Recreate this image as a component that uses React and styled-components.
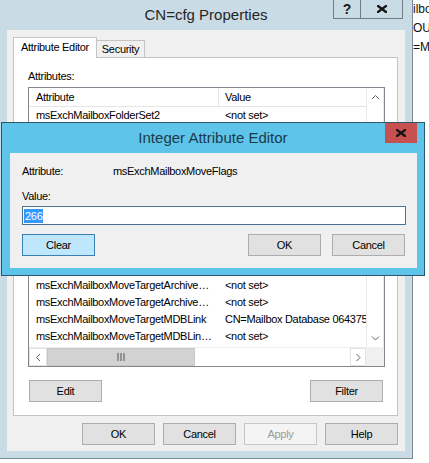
import React from 'react';
import styled, { createGlobalStyle } from 'styled-components';

const Global = createGlobalStyle`
  html, body { margin: 0; padding: 0; background: #fff; }
  body { width: 429px; height: 463px; overflow: hidden; font-family: "Liberation Sans", Arial, sans-serif; }
  * { box-sizing: border-box; }
`;

const Desktop = styled.div`
  position: relative;
  width: 429px;
  height: 463px;
  overflow: hidden;
  background: #fff;
  font-family: "Liberation Sans", Arial, sans-serif;
  font-size: 11px;
  letter-spacing: -0.3px;
  color: #000;
`;

const BackdropText = styled.div`
  position: absolute;
  left: 413px;
  top: 0;
  font-size: 12px;
  line-height: 19px;
  letter-spacing: 0;
  color: #111;
  white-space: pre;
`;

const Tick = styled.div`
  position: absolute;
  left: 40px;
  top: 455px;
  font-size: 9px;
  color: #666;
`;

const Window = styled.div`
  position: absolute;
  left: -1px;
  top: -1px;
  width: 414px;
  height: 460px;
  border: 1px solid #7c8a93;
  background: #c9dbe5;
  display: flex;
  flex-direction: column;
`;

const TitleBar = styled.div`
  height: ${p => p.$h}px;
  flex: none;
  display: grid;
  grid-template-columns: 1fr auto 1fr;
`;

const Title = styled.div`
  grid-column: 2;
  font-size: 15px;
  letter-spacing: 0;
  line-height: ${p => p.$h}px;
  color: ${p => p.$color};
  white-space: nowrap;
`;

const CaptionGroup = styled.div`
  grid-column: 3;
  justify-self: end;
  align-self: start;
  display: flex;
  margin-right: 9px;
`;

const CaptionButton = styled.div`
  width: ${p => p.$w}px;
  height: 19px;
  border: 1px solid #707c85;
  border-top: none;
  border-left: ${p => (p.$joined ? 'none' : '1px solid #707c85')};
  display: flex;
  align-items: center;
  justify-content: center;
  font-size: 14px;
  font-weight: bold;
  letter-spacing: 0;
  color: #1a1a1a;
`;

const Client = styled.div`
  flex: 1;
  margin: 0 7px 7px 7px;
  background: #f0f0f0;
  padding: 7px 7px 6px 6px;
  display: flex;
  flex-direction: column;
`;

const TabStrip = styled.div`
  height: 20px;
  flex: none;
  display: flex;
  align-items: flex-end;
  position: relative;
  z-index: 1;
`;

const Tab = styled.div`
  width: ${p => p.$w}px;
  height: ${p => (p.$active ? 21 : 17)}px;
  margin-bottom: ${p => (p.$active ? -1 : 0)}px;
  background: ${p => (p.$active ? '#fff' : '#f0f0f0')};
  border: 1px solid #c4c4c4;
  border-bottom: none;
  border-left: ${p => (p.$active ? '1px solid #c4c4c4' : 'none')};
  padding-left: ${p => (p.$active ? 7 : 0)}px;
  text-align: ${p => (p.$active ? 'left' : 'center')};
  line-height: ${p => (p.$active ? 19 : 16)}px;
  white-space: nowrap;
`;

const Panel = styled.div`
  flex: 1;
  background: #fff;
  border: 1px solid #c4c4c4;
  padding: 12px 12px 13px 14px;
  display: flex;
  flex-direction: column;
`;

const FieldLabel = styled.div`
  line-height: 13px;
  margin-bottom: 4px;
`;

const ListView = styled.div`
  height: 280px;
  flex: none;
  border: 1px solid #828790;
  display: grid;
  grid-template-columns: 1fr 18px;
  grid-template-rows: 1fr 19px;
  background: #fff;
`;

const ListContent = styled.div`
  overflow: hidden;
`;

const RowGrid = styled.div`
  display: grid;
  grid-template-columns: 190px 1fr;
  height: ${p => (p.$header ? 19 : 17)}px;
  line-height: ${p => (p.$header ? 19 : 17)}px;
  border-bottom: ${p => (p.$header ? '1px solid #e5e5e5' : 'none')};
`;

const Cell = styled.div`
  white-space: nowrap;
  overflow: hidden;
  text-overflow: ${p => (p.$ellipsis ? 'ellipsis' : 'clip')};
  padding-left: ${p => p.$pl}px;
  padding-right: ${p => (p.$ellipsis ? 5 : 0)}px;
  border-right: ${p => (p.$divider ? '1px solid #e5e5e5' : 'none')};
`;

const VScroll = styled.div`
  grid-column: 2;
  grid-row: 1;
  display: flex;
  flex-direction: column;
  background: #fff;
  border-left: 1px solid #e8e8e8;
  border-right: 1px solid #e8e8e8;
`;

const HScroll = styled.div`
  grid-column: 1;
  grid-row: 2;
  display: flex;
  background: #fff;
  border-top: 1px solid #ececec;
`;

const ArrowBox = styled.div`
  flex: none;
  width: ${p => (p.$w ? `${p.$w}px` : 'auto')};
  height: ${p => (p.$h ? `${p.$h}px` : 'auto')};
  display: flex;
  align-items: center;
  justify-content: center;
  border: ${p => (p.$boxed ? '1px solid #e3e3e3' : 'none')};
`;

const Track = styled.div`
  flex: 1;
  display: flex;
  flex-direction: ${p => (p.$vertical ? 'column' : 'row')};
`;

const Thumb = styled.div`
  flex: none;
  width: ${p => (p.$vertical ? '100%' : `${p.$size}px`)};
  height: ${p => (p.$vertical ? `${p.$size}px` : '100%')};
  margin-top: ${p => (p.$vertical ? 40 : 0)}px;
  background: #d2d2d2;
  border: 1px solid #c6c6c6;
  display: flex;
  align-items: center;
  justify-content: center;
`;

const Corner = styled.div`
  grid-column: 2;
  grid-row: 2;
  background: #f0f0f0;
`;

const ButtonRow = styled.div`
  display: flex;
  justify-content: ${p => p.$justify || 'space-between'};
  gap: ${p => p.$gap || 0}px;
  margin-top: ${p => p.$mt}px;
  padding: ${p => p.$pad || '0'};
`;

const Button = styled.div`
  width: 73px;
  height: 22px;
  flex: none;
  display: flex;
  align-items: center;
  justify-content: center;
  border: 1px solid ${p => (p.$variant === 'focus' ? '#3c7fb1' : p.$variant === 'disabled' ? '#c6c6c6' : '#adadad')};
  background: ${p => (p.$variant === 'focus' ? '#bee6fd' : p.$variant === 'disabled' ? '#f4f4f4' : '#e1e1e1')};
  color: ${p => (p.$variant === 'disabled' ? '#9a9a9a' : '#000')};
  margin-right: ${p => (p.$pushLeft ? 'auto' : '0')};
`;

const Dialog = styled.div`
  position: absolute;
  left: 1px;
  top: 122px;
  width: 424px;
  height: 154px;
  border: 1px solid #2f5568;
  background: #5ec4e9;
  display: flex;
  flex-direction: column;
  z-index: 5;
`;

const CloseButton = styled.div`
  grid-column: 3;
  justify-self: end;
  align-self: start;
  width: 32px;
  height: 20px;
  margin-right: 7px;
  background: #c75050;
  display: flex;
  align-items: center;
  justify-content: center;
`;

const DialogClient = styled.div`
  flex: 1;
  margin: 0 7px 7px 8px;
  background: #f0f0f0;
  padding: 12px 11px 12px 12px;
  display: flex;
  flex-direction: column;
`;

const InfoRow = styled.div`
  display: grid;
  grid-template-columns: 91px 1fr;
  line-height: 13px;
`;

const ValueLabel = styled.div`
  margin-top: 12px;
  line-height: 13px;
`;

const TextBox = styled.div`
  margin-top: 3px;
  height: 19px;
  border: 1px solid #4f7190;
  background: #fff;
  padding-left: 1px;
  display: flex;
  align-items: center;
`;

const Selected = styled.span`
  background: #3399ff;
  color: #fff;
  line-height: 14px;
  padding: 0 1px;
`;

const Chevron = ({ dir }) => {
  const pts = {
    up: '1,5 4.5,1.5 8,5',
    down: '1,1.5 4.5,5 8,1.5',
    left: '5,1 1.5,4.5 5,8',
    right: '1.5,1 5,4.5 1.5,8',
  }[dir];
  const vertical = dir === 'up' || dir === 'down';
  return (
    <svg width={vertical ? 9 : 7} height={vertical ? 7 : 9} viewBox={vertical ? '0 0 9 7' : '0 0 7 9'}>
      <polyline points={pts} fill="none" stroke="#606060" strokeWidth="1" />
    </svg>
  );
};

const Grip = () => (
  <svg width="8" height="8" viewBox="0 0 8 8">
    <rect x="0.5" y="0" width="1" height="8" fill="#555" />
    <rect x="3.5" y="0" width="1" height="8" fill="#555" />
    <rect x="6.5" y="0" width="1" height="8" fill="#555" />
  </svg>
);

const CloseGlyph = ({ w = 10, h = 8 }) => (
  <svg width={w} height={h} viewBox={`0 0 ${w} ${h}`}>
    <path d={`M1 1 L${w - 1} ${h - 1} M${w - 1} 1 L1 ${h - 1}`} stroke="#151515" strokeWidth="2.3" strokeLinecap="square" />
  </svg>
);

const rows = [
  ['msExchMailboxFolderSet2', '<not set>'],
  ['msExchMailboxGuid', '<not set>'],
  ['msExchMailboxMoveBatchName', '<not set>'],
  ['msExchMailboxMoveFlags', '266'],
  ['msExchMailboxMoveRemoteHostName', '<not set>'],
  ['msExchMailboxMoveRequestGuid', '<not set>'],
  ['msExchMailboxMoveSourceArchiveMDBLink', '<not set>'],
  ['msExchMailboxMoveSourceArchiveMDBLinkSL', '<not set>'],
  ['msExchMailboxMoveSourceMDBLink', '<not set>'],
  ['msExchMailboxMoveStatus', '<not set>'],
  ['msExchMailboxMoveTargetArchiveMDBLink', '<not set>'],
  ['msExchMailboxMoveTargetArchiveMDBLinkSL', '<not set>'],
  ['msExchMailboxMoveTargetMDBLink', 'CN=Mailbox Database 0643756294,CN=Databases,CN=Exchange'],
  ['msExchMailboxMoveTargetMDBLinkSL', '<not set>'],
];

export default function App() {
  return (
    <>
      <Global />
      <Desktop>
        <BackdropText>{'ilbox\nOU=\n=Mi'}</BackdropText>
        <Tick>''</Tick>

        <Window>
          <TitleBar $h={30}>
            <Title $h={30} $color="#262626">CN=cfg Properties</Title>
            <CaptionGroup>
              <CaptionButton $w={28}>?</CaptionButton>
              <CaptionButton $w={42} $joined>
                <CloseGlyph w={10} h={8} />
              </CaptionButton>
            </CaptionGroup>
          </TitleBar>

          <Client>
            <TabStrip>
              <Tab $active $w={84}>Attribute Editor</Tab>
              <Tab $w={48}>Security</Tab>
            </TabStrip>

            <Panel>
              <FieldLabel>Attributes:</FieldLabel>
              <ListView>
                <ListContent>
                  <RowGrid $header>
                    <Cell $pl={7} $divider>Attribute</Cell>
                    <Cell $pl={6}>Value</Cell>
                  </RowGrid>
                  {rows.map(([name, value]) => (
                    <RowGrid key={name}>
                      <Cell $pl={7} $ellipsis>{name}</Cell>
                      <Cell $pl={6}>{value}</Cell>
                    </RowGrid>
                  ))}
                </ListContent>
                <VScroll>
                  <ArrowBox $h={18}><Chevron dir="up" /></ArrowBox>
                  <Track $vertical>
                    <Thumb $vertical $size={70} />
                  </Track>
                  <ArrowBox $h={18}><Chevron dir="down" /></ArrowBox>
                </VScroll>
                <HScroll>
                  <ArrowBox $w={18} $boxed><Chevron dir="left" /></ArrowBox>
                  <Thumb $size={148}><Grip /></Thumb>
                  <Track />
                  <ArrowBox $w={16} $boxed><Chevron dir="right" /></ArrowBox>
                </HScroll>
                <Corner />
              </ListView>

              <ButtonRow $mt={13} $pad="0 2px 0 1px">
                <Button>Edit</Button>
                <Button>Filter</Button>
              </ButtonRow>
            </Panel>

            <ButtonRow $mt={7} $justify="flex-end" $gap={8}>
              <Button>OK</Button>
              <Button>Cancel</Button>
              <Button $variant="disabled">Apply</Button>
              <Button>Help</Button>
            </ButtonRow>
          </Client>
        </Window>

        <Dialog>
          <TitleBar $h={30}>
            <Title $h={30} $color="#1b3b4b">Integer Attribute Editor</Title>
            <CloseButton>
              <CloseGlyph w={10} h={8} />
            </CloseButton>
          </TitleBar>
          <DialogClient>
            <InfoRow>
              <span>Attribute:</span>
              <span>msExchMailboxMoveFlags</span>
            </InfoRow>
            <ValueLabel>Value:</ValueLabel>
            <TextBox>
              <Selected>266</Selected>
            </TextBox>
            <ButtonRow $mt={9} $gap={11} $pad="0 1px 0 0" $justify="flex-start">
              <Button $variant="focus" $pushLeft>Clear</Button>
              <Button>OK</Button>
              <Button>Cancel</Button>
            </ButtonRow>
          </DialogClient>
        </Dialog>
      </Desktop>
    </>
  );
}
